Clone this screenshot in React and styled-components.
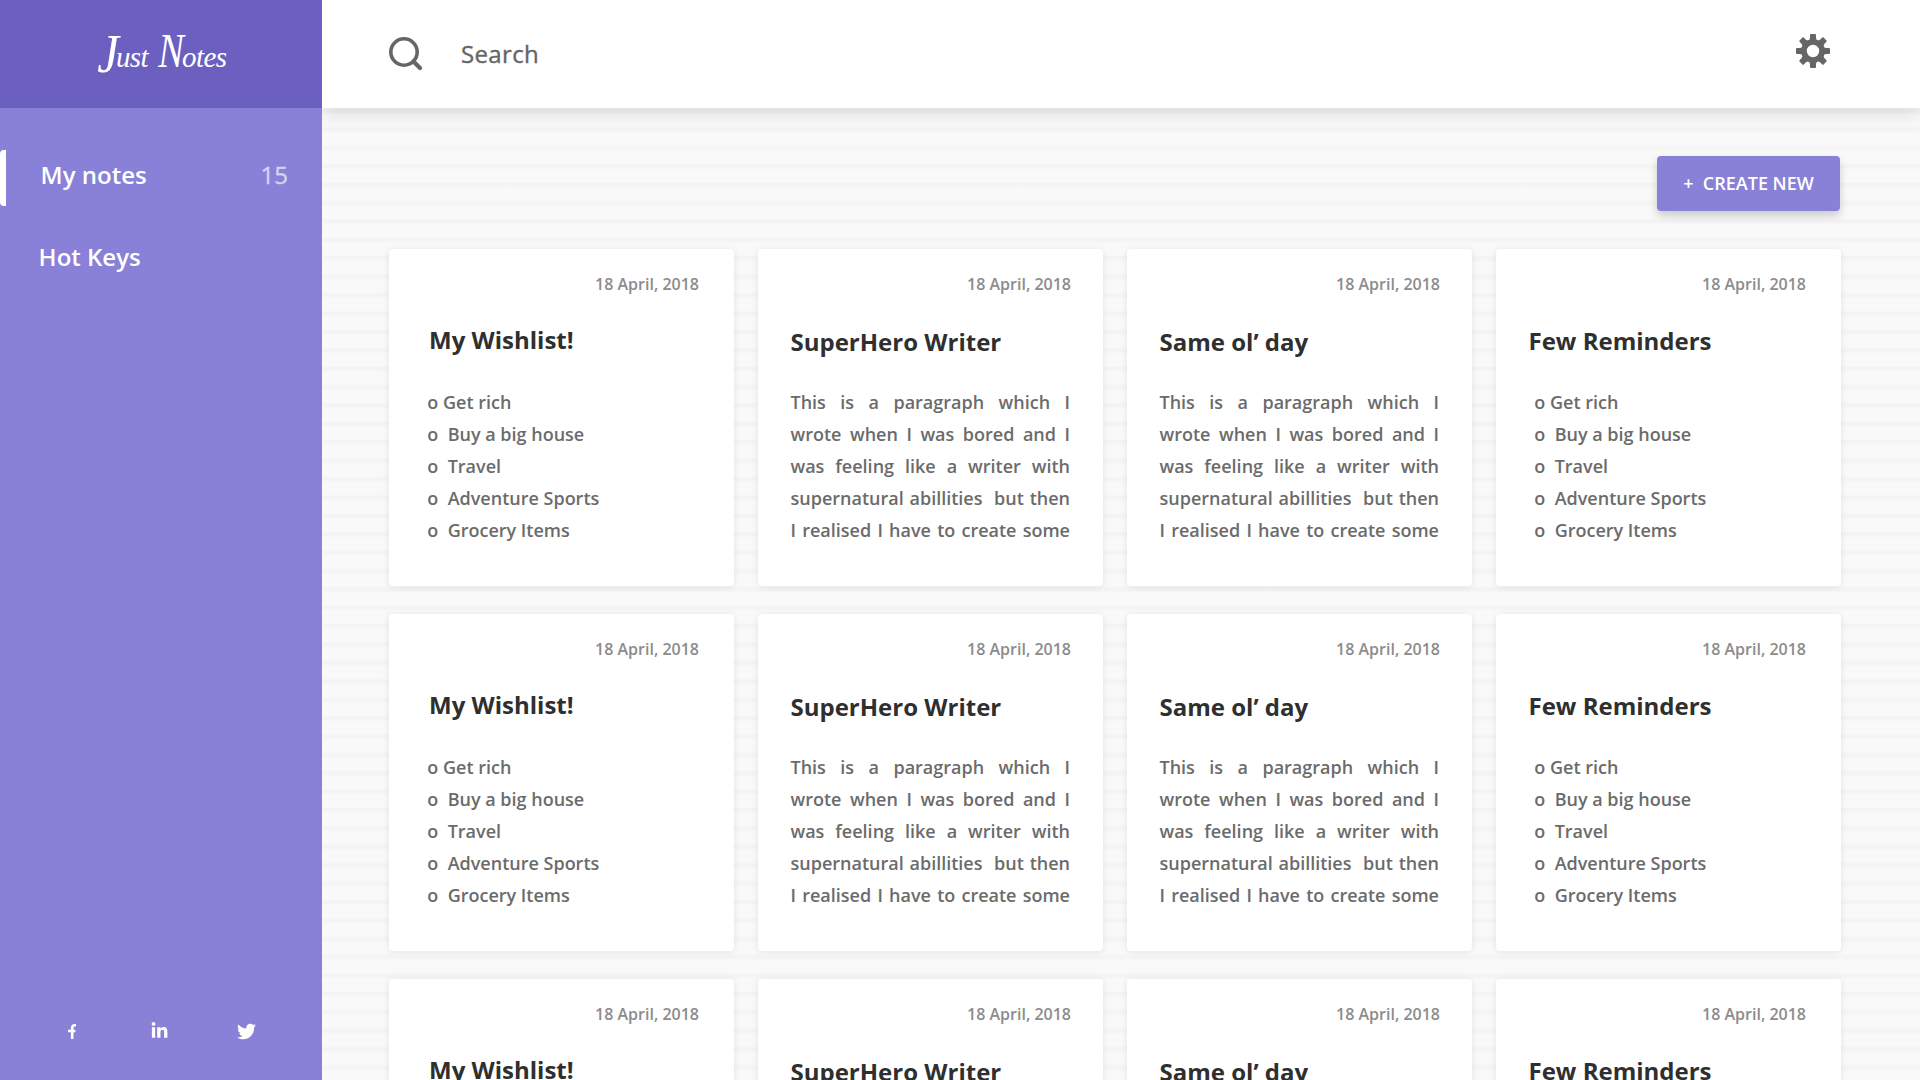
import React from 'react';
import styled, { createGlobalStyle } from 'styled-components';
import { FaLinkedinIn, FaTwitter } from 'react-icons/fa';

const GlobalStyle = createGlobalStyle`
  * { box-sizing: border-box; }
  body {
    margin: 0;
    overflow: hidden;
    font-family: "Open Sans", "Liberation Sans", sans-serif;
    background: #f9f9f9;
  }
`;

const Page = styled.div`
  display: grid;
  grid-template-columns: 322px 1fr;
  grid-template-rows: 1080px;
  width: 1920px;
  height: 1080px;
  overflow: hidden;
`;

const Sidebar = styled.aside`
  display: flex;
  flex-direction: column;
  background: #8980d7;
  color: #fff;
`;

const Brand = styled.div`
  display: flex;
  flex: none;
  justify-content: center;
  height: 108px;
  padding-top: 28px;
  background: #6b60bf;
`;

const BrandName = styled.span`
  font: italic 400 29px/42px "Liberation Serif", serif;
  letter-spacing: -0.6px;
  white-space: pre;
`;

const BrandInitial = styled.span`
  display: inline-block;
  margin-right: ${(p) => p.$tuck}px;
  font-size: ${(p) => p.$size}px;
  line-height: 42px;
  transform: translateY(${(p) => p.$dip}px) scaleX(${(p) => p.$stretch});
`;

const Nav = styled.nav`
  display: flex;
  flex-direction: column;
  gap: 26px;
  padding-top: 42px;
`;

const NavItem = styled.a`
  display: flex;
  align-items: center;
  justify-content: space-between;
  height: 56px;
  padding: 0 34px 7px ${(p) => (p.$active ? 34.6 : 38.6)}px;
  border-left: ${(p) => (p.$active ? '6px solid #fff' : '0')};
  border-radius: 4px;
  font-size: 24px;
  font-weight: 600;
`;

const NavCount = styled.span`
  font-weight: 400;
  -webkit-text-stroke: 0.4px #d6d2f2;
  color: #d6d2f2;
`;

const Social = styled.div`
  display: flex;
  align-items: center;
  height: 16px;
  margin: auto 0 41px;
  padding-left: 68px;
`;

const SocialLink = styled.a`
  display: flex;
  width: ${(p) => p.$width}px;
  margin-right: ${(p) => p.$after}px;
`;

const Main = styled.main`
  display: flex;
  flex-direction: column;
  min-width: 0;
`;

const TopBar = styled.header`
  display: flex;
  flex: none;
  align-items: center;
  height: 108px;
  padding: 0 90px 0 67px;
  background: #fff;
  color: #666;
  box-shadow: 0 4px 20px rgba(0, 0, 0, 0.13);
  clip-path: inset(0 0 -40px 0);
  z-index: 1;
`;

const SearchLabel = styled.span`
  flex: 1;
  margin-left: 38px;
  padding-bottom: 2px;
  font-size: 24px;
  letter-spacing: 0.35px;
  -webkit-text-stroke: 0.4px #666;
`;

const GearSlot = styled.span`
  display: flex;
  margin-bottom: 6px;
`;

const Board = styled.section`
  flex: 1;
  min-height: 0;
  padding: 48px 79px 0 67px;
  overflow: hidden;
  background: repeating-linear-gradient(
    to bottom,
    #f9f9f9 0,
    #f4f4f4 2px,
    #f4f4f4 4px,
    #f9f9f9 7px,
    #f9f9f9 18.39px
  );
`;

const Actions = styled.div`
  display: flex;
  justify-content: flex-end;
  margin-bottom: 38px;
  padding-right: 1px;
`;

const CreateButton = styled.button`
  width: 183px;
  height: 55px;
  padding: 0;
  border: 0;
  border-radius: 4px;
  background: #8980d7;
  box-shadow: 0 5px 9px rgba(0, 0, 0, 0.18);
  color: #fff;
  font: 600 18px/55px "Open Sans", sans-serif;
  white-space: pre;
`;

const Notes = styled.div`
  display: grid;
  grid-template-columns: repeat(4, 345px);
  gap: 28px 24px;
`;

const Card = styled.article`
  display: flex;
  flex-direction: column;
  height: 337px;
  padding-top: 23px;
  border-radius: 4px;
  background: #fff;
  box-shadow: 0 1px 7px rgba(0, 0, 0, 0.09);
`;

const CardDate = styled.time`
  padding-right: ${(p) => p.$right}px;
  font-size: 16px;
  font-weight: 600;
  line-height: 24px;
  text-align: right;
  color: #8c8c8c;
`;

const CardTitle = styled.h2`
  height: 60px;
  margin: ${(p) => 26 + p.$drop}px 0 ${(p) => 4 - p.$drop}px;
  padding-left: ${(p) => p.$left}px;
  font-size: 24px;
  line-height: 36px;
  font-weight: 700;
  color: #2f2f2f;
`;

const NoteLines = styled.div`
  display: flex;
  flex-direction: column;
  padding-left: ${(p) => p.$left}px;
  font-size: 18px;
  font-weight: 600;
  line-height: 32px;
  color: #6b6b6b;
`;

const ListLine = styled.span`
  white-space: pre;
`;

const TextLine = styled.span`
  width: 279.5px;
  text-align: justify;
  text-align-last: justify;
`;

const wishes = ['o Get rich', 'o  Buy a big house', 'o  Travel', 'o  Adventure Sports', 'o  Grocery Items'];
const story = [
  'This is a paragraph which I',
  'wrote when I was bored and I',
  'was feeling like a writer with',
  'supernatural abillities \u00a0but then',
  'I realised I have to create some',
];

const noteRow = [
  { title: 'My Wishlist!', lines: wishes, list: true, left: 40, drop: 0, bodyLeft: 38.3, right: 35 },
  { title: 'SuperHero Writer', lines: story, left: 32.5, drop: 2, bodyLeft: 32.5, right: 32 },
  { title: 'Same ol’ day', lines: story, left: 32.5, drop: 2, bodyLeft: 32.5, right: 32 },
  { title: 'Few Reminders', lines: wishes, list: true, left: 32.5, drop: 1, bodyLeft: 38.3, right: 35 },
];
// The last row starts below the fold, so only its date and title are needed.
const notes = [...noteRow, ...noteRow, ...noteRow.map((n) => ({ ...n, lines: [] }))];

function SearchIcon() {
  return (
    <svg width="34" height="34" viewBox="0 0 34 34" fill="none" stroke="#666">
      <circle cx="15" cy="15" r="13.2" strokeWidth="3.6" />
      <path d="M24.5 24.5L31 31" strokeWidth="4.2" strokeLinecap="round" />
    </svg>
  );
}

function GearIcon() {
  return (
    <svg width="34" height="34" viewBox="-17 -17 34 34" fill="#666">
      <circle r="9" fill="none" stroke="#666" strokeWidth="5.6" />
      {[0, 45, 90, 135, 180, 225, 270, 315].map((a) => (
        <path key={a} transform={`rotate(${a})`} d="M-4 -10L-3 -13V-16Q-3 -17 -2 -17H2Q3 -17 3 -16V-13L4 -10Z" />
      ))}
    </svg>
  );
}

function FacebookIcon() {
  return (
    <svg width="8" height="15" viewBox="0 0 8 15" fill="none" stroke="#fff" strokeWidth="2.6">
      <path d="M8 1.3H6.8Q4.2 1.3 4.2 3.9V15M0 7H7.4" />
    </svg>
  );
}

function NoteCard({ note }) {
  const Line = note.list ? ListLine : TextLine;
  return (
    <Card>
      <CardDate $right={note.right}>18 April, 2018</CardDate>
      <CardTitle $left={note.left} $drop={note.drop}>{note.title}</CardTitle>
      <NoteLines $left={note.bodyLeft}>
        {note.lines.map((l) => <Line key={l}>{l}</Line>)}
      </NoteLines>
    </Card>
  );
}

export default function App() {
  return (
    <Page>
      <GlobalStyle />
      <Sidebar>
        <Brand>
          <BrandName>
            <BrandInitial $size={54} $dip={5} $stretch={0.9} $tuck={-3}>J</BrandInitial>ust{' '}
            <BrandInitial $size={48} $dip={0} $stretch={0.8} $tuck={-4}>N</BrandInitial>otes
          </BrandName>
        </Brand>
        <Nav>
          <NavItem $active>My notes<NavCount>15</NavCount></NavItem>
          <NavItem>Hot Keys</NavItem>
        </Nav>
        <Social>
          <SocialLink $width={8} $after={75}><FacebookIcon /></SocialLink>
          <SocialLink $width={17} $after={69}><FaLinkedinIn size={18} /></SocialLink>
          <SocialLink $width={19} $after={0}><FaTwitter size={19} /></SocialLink>
        </Social>
      </Sidebar>
      <Main>
        <TopBar>
          <SearchIcon />
          <SearchLabel>Search</SearchLabel>
          <GearSlot><GearIcon /></GearSlot>
        </TopBar>
        <Board>
          <Actions><CreateButton>+  CREATE NEW</CreateButton></Actions>
          <Notes>{notes.map((n, i) => <NoteCard key={i} note={n} />)}</Notes>
        </Board>
      </Main>
    </Page>
  );
}
